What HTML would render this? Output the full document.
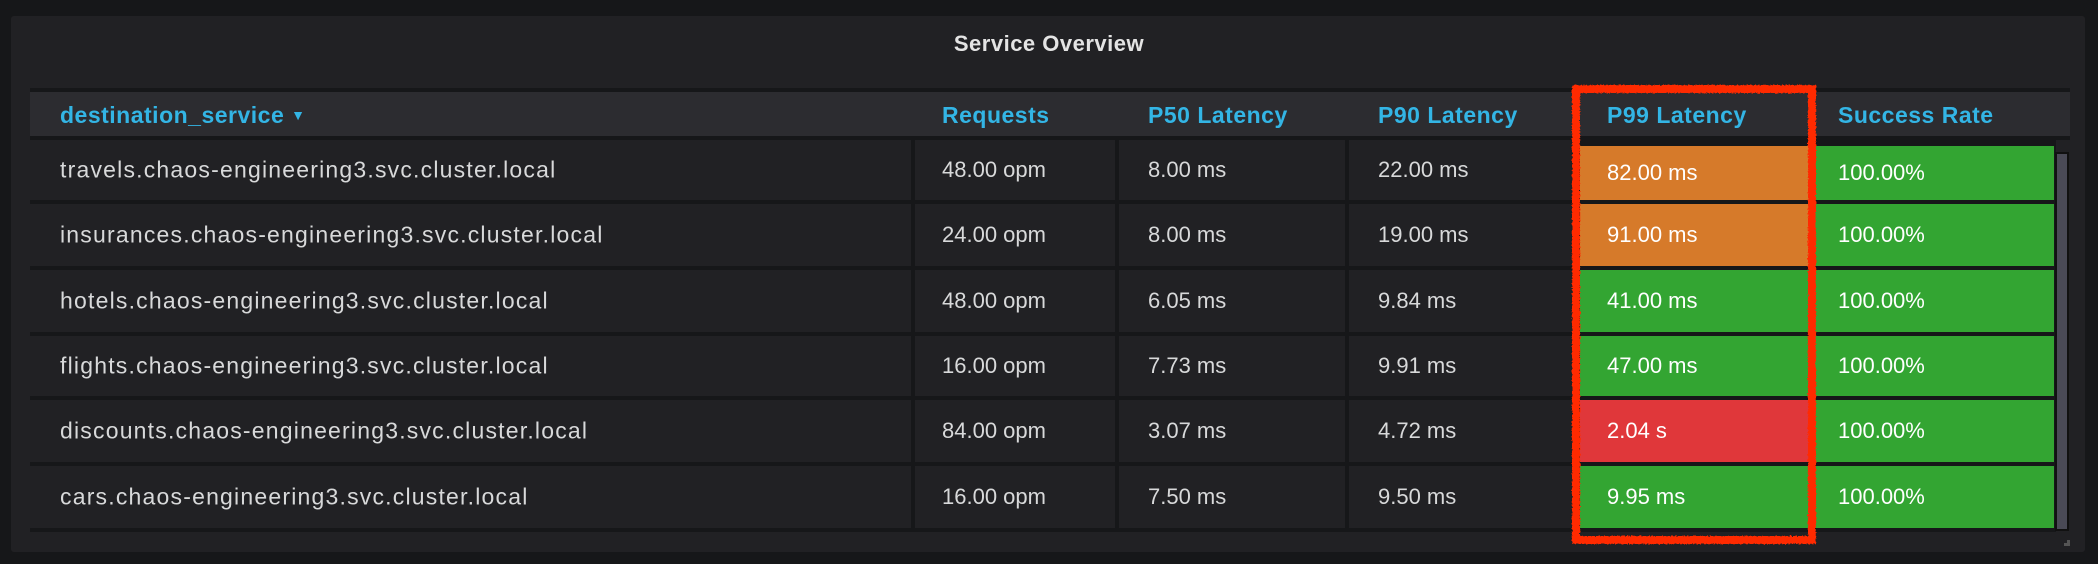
<!DOCTYPE html>
<html><head><meta charset="utf-8"><style>
*{margin:0;padding:0;box-sizing:border-box}
body{width:2098px;height:564px;background:#161719;position:relative;overflow:hidden;font-family:"Liberation Sans",sans-serif}
.panel{position:absolute;left:11px;top:16px;width:2074px;height:536px;background:#212124;border-radius:3px}
.title{position:absolute;left:0;top:44px;width:2098px;text-align:center;color:#e4e4e4;font-size:22px;font-weight:bold;line-height:1;margin-top:-11px;letter-spacing:0.5px}
.hdrline{position:absolute;left:30px;top:88px;width:2040px;height:52px;background:#161719}
.hdr{position:absolute;left:30px;top:92px;width:2040px;height:44px;background:#2c2c30}
.h{position:absolute;top:92px;height:44px;line-height:46px;color:#33b5e5;font-size:23px;font-weight:bold;letter-spacing:0.5px}
.grid{position:absolute;left:30px;top:140px;width:2026px;height:392px;background:#161719}
.c{position:absolute;background:#212124;color:#d8d9da;font-size:22px;padding-left:0}
.c span{position:absolute;left:0;top:50%;transform:translateY(-50%);white-space:nowrap}
.c.n span{font-size:23px;letter-spacing:1.2px}
.o{background:#d67a2a;color:#fff}.g{background:#33a532;color:#fff}.r{background:#e0373a;color:#fff}
.sb{position:absolute;left:2055px;top:152px;width:14px;height:379px;background:#4a4a56;border:2px solid #111}
.box{position:absolute;left:1572px;top:85px;width:244px;height:459px;border:8px solid #ff2a00;filter:url(#rough)}
</style></head><body>
<svg width="0" height="0" style="position:absolute"><filter id="rough"><feTurbulence type="fractalNoise" baseFrequency="0.6" numOctaves="2" result="n"/><feDisplacementMap in="SourceGraphic" in2="n" scale="3"/></filter></svg>
<div class="panel"></div>
<div class="title">Service Overview</div>
<div class="hdrline"></div>
<div class="hdr"></div>
<div class="h" style="left:60px">destination_service <span style="font-size:14px;position:relative;top:-3px">▼</span></div>
<div class="h" style="left:942px">Requests</div>
<div class="h" style="left:1148px">P50 Latency</div>
<div class="h" style="left:1378px">P90 Latency</div>
<div class="h" style="left:1607px">P99 Latency</div>
<div class="h" style="left:1838px">Success Rate</div>
<div class="grid"></div>
<div id="rows"></div>
<script>
var rows=[["travels",  "48.00 opm","8.00 ms","22.00 ms","82.00 ms","o"],
["insurances","24.00 opm","8.00 ms","19.00 ms","91.00 ms","o"],
["hotels","48.00 opm","6.05 ms","9.84 ms","41.00 ms","g"],
["flights","16.00 opm","7.73 ms","9.91 ms","47.00 ms","g"],
["discounts","84.00 opm","3.07 ms","4.72 ms","2.04 s","r"],
["cars","16.00 opm","7.50 ms","9.50 ms","9.95 ms","g"]];
var tops=[140,204,270,336,400,466],hs=[60,62,62,60,62,62];
var cols=[[30,881,60],[915,200,942],[1119,226,1148],[1349,229,1378],[1580,232,1607],[1814,240,1838]];
var h="";
rows.forEach(function(r,i){
 var vals=[r[0]+".chaos-engineering3.svc.cluster.local",r[1],r[2],r[3],r[4],"100.00%"];
 cols.forEach(function(c,j){
  var cls="c"+(j==0?" n":"")+(j==4?" "+r[5]:"")+(j==5?" g":"");
  var t=tops[i],hh=hs[i];
  if(j>=4&&i==0){t=146;hh=54;}
  h+='<div class="'+cls+'" style="left:'+c[0]+'px;top:'+t+'px;width:'+c[1]+'px;height:'+hh+'px"><span style="left:'+(c[2]-c[0])+'px">'+vals[j]+'</span></div>';
 });
});
document.getElementById("rows").innerHTML=h;
</script>
<div class="sb"></div>
<div style="position:absolute;left:2064px;top:540px;width:6px;height:6px;border-right:3px solid #555;border-bottom:3px solid #555"></div>
<div class="box"></div>
</body></html>
